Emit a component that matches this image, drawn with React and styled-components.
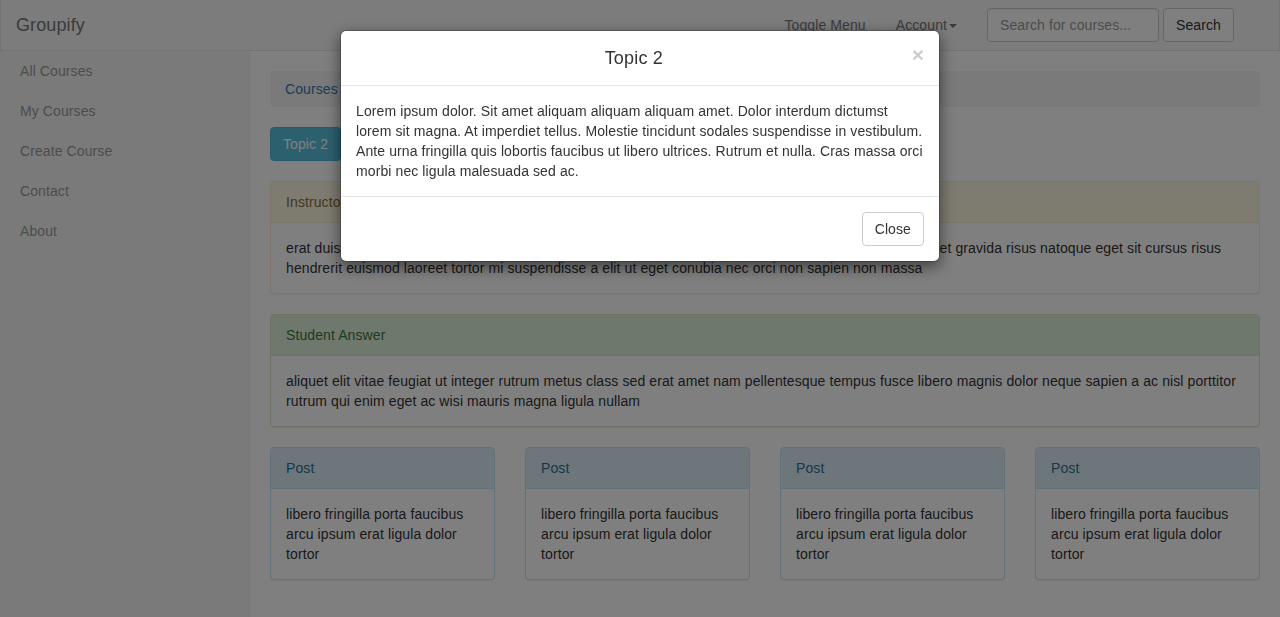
import React from 'react';
import styled, { createGlobalStyle } from 'styled-components';

const GlobalStyle = createGlobalStyle`
  * { box-sizing: border-box; }
  html, body {
    margin: 0;
    height: 100%;
    overflow: hidden;
  }
  body {
    font-family: "Liberation Sans", Arial, Helvetica, sans-serif;
    font-size: 14px;
    line-height: 20px;
    letter-spacing: 0.1px;
    color: #333;
    background: #fff;
  }
`;

const Page = styled.div`
  display: flex;
  flex-direction: column;
  min-height: 100vh;
`;

const Navbar = styled.nav`
  display: flex;
  align-items: center;
  height: 51px;
  background: #f8f8f8;
  border: 1px solid #e7e7e7;
  border-top: 0;
`;

const Brand = styled.a`
  padding: 15px 15px;
  font-size: 18px;
  line-height: 20px;
  color: #777;
  text-decoration: none;
`;

const NavLinks = styled.ul`
  display: flex;
  list-style: none;
  margin: 0 0 0 auto;
  padding: 0;
`;

const NavLink = styled.a`
  display: block;
  padding: 15px;
  color: #777;
  text-decoration: none;
`;

const Caret = styled.span`
  display: inline-block;
  width: 0;
  height: 0;
  margin-left: 2px;
  vertical-align: middle;
  border-top: 4px solid;
  border-right: 4px solid transparent;
  border-left: 4px solid transparent;
`;

const SearchForm = styled.form`
  display: flex;
  gap: 4px;
  padding: 8px 45px 8px 15px;
`;

const SearchInput = styled.input`
  width: 172px;
  height: 34px;
  padding: 6px 12px;
  font: inherit;
  letter-spacing: inherit;
  color: #555;
  border: 1px solid #ccc;
  border-radius: 4px;
  box-shadow: inset 0 1px 1px rgba(0, 0, 0, 0.075);
  &::placeholder { color: #999; }
`;

const Button = styled.button`
  height: 34px;
  padding: 6px 12px;
  font: inherit;
  letter-spacing: inherit;
  line-height: 20px;
  border: 1px solid ${({ $variant }) => ($variant === 'info' ? '#46b8da' : '#ccc')};
  border-radius: 4px;
  background: ${({ $variant }) => ($variant === 'info' ? '#5bc0de' : '#fff')};
  color: ${({ $variant }) => ($variant === 'info' ? '#fff' : '#333')};
  cursor: pointer;
`;

const Body = styled.div`
  display: flex;
  flex: 1;
`;

const Sidebar = styled.ul`
  width: 250px;
  flex-shrink: 0;
  margin: 0;
  padding: 0;
  list-style: none;
  background: #f5f5f5;
  border-right: 1px solid #eee;
`;

const SideLink = styled.a`
  display: block;
  padding: 10px 20px;
  color: #999;
  text-decoration: none;
`;

const Main = styled.main`
  flex: 1;
  padding: 20px;
`;

const Breadcrumb = styled.ol`
  display: flex;
  margin: 0 0 20px;
  padding: 8px 15px;
  list-style: none;
  background: #f5f5f5;
  border-radius: 4px;
  li + li::before {
    content: '/\\00a0';
    padding: 0 5px;
    color: #ccc;
  }
  a { color: #337ab7; text-decoration: none; }
`;

const Toolbar = styled.div`
  display: flex;
  gap: 4px;
  margin-bottom: 20px;
`;

const tones = {
  warning: { bg: '#fcf8e3', color: '#8a6d3b', border: '#faebcc' },
  success: { bg: '#dff0d8', color: '#3c763d', border: '#d6e9c6' },
  info: { bg: '#d9edf7', color: '#31708f', border: '#bce8f1' },
};

const Panel = styled.div`
  margin-bottom: 20px;
  background: #fff;
  border: 1px solid ${({ $tone }) => tones[$tone].border};
  border-radius: 4px;
  box-shadow: 0 1px 1px rgba(0, 0, 0, 0.05);
`;

const PanelHeading = styled.div`
  padding: 10px 15px;
  background: ${({ $tone }) => tones[$tone].bg};
  color: ${({ $tone }) => tones[$tone].color};
  border-bottom: 1px solid ${({ $tone }) => tones[$tone].border};
  border-radius: 3px 3px 0 0;
`;

const PanelBody = styled.div`
  padding: 15px;
`;

const PostGrid = styled.div`
  display: grid;
  grid-template-columns: repeat(4, 1fr);
  column-gap: 30px;
`;

const Backdrop = styled.div`
  position: fixed;
  inset: 0;
  background: rgba(0, 0, 0, 0.5);
  z-index: 10;
`;

const ModalDialog = styled.div`
  width: 600px;
  margin: 30px auto;
`;

const ModalContent = styled.div`
  background: #fff;
  border: 1px solid rgba(0, 0, 0, 0.2);
  border-radius: 6px;
  box-shadow: 0 5px 15px rgba(0, 0, 0, 0.5);
  background-clip: padding-box;
`;

const ModalHeader = styled.div`
  display: flex;
  align-items: flex-start;
  padding: 15px;
  border-bottom: 1px solid #e5e5e5;
`;

const ModalTitle = styled.h4`
  flex: 1;
  margin: 0;
  font-size: 18px;
  font-weight: 500;
  line-height: 24px;
  letter-spacing: 0.2px;
  text-align: center;
`;

const CloseX = styled.button`
  margin-top: -2px;
  padding: 0;
  border: 0;
  background: transparent;
  font: inherit;
  font-size: 21px;
  font-weight: bold;
  line-height: 1;
  color: #000;
  opacity: 0.2;
  text-shadow: 0 1px 0 #fff;
  cursor: pointer;
`;

const ModalBody = styled.div`
  padding: 15px;
`;

const ModalFooter = styled.div`
  display: flex;
  justify-content: flex-end;
  padding: 15px;
  border-top: 1px solid #e5e5e5;
`;

const sideItems = ['All Courses', 'My Courses', 'Create Course', 'Contact', 'About'];

const postText = 'libero fringilla porta faucibus arcu ipsum erat ligula dolor tortor';

export default function App() {
  return (
    <>
      <GlobalStyle />
      <Page>
        <Navbar>
          <Brand href="#">Groupify</Brand>
          <NavLinks>
            <li><NavLink href="#">Toggle Menu</NavLink></li>
            <li><NavLink href="#">Account<Caret /></NavLink></li>
          </NavLinks>
          <SearchForm onSubmit={(e) => e.preventDefault()}>
            <SearchInput placeholder="Search for courses..." />
            <Button type="submit">Search</Button>
          </SearchForm>
        </Navbar>
        <Body>
          <Sidebar>
            {sideItems.map((item) => (
              <li key={item}><SideLink href="#">{item}</SideLink></li>
            ))}
          </Sidebar>
          <Main>
            <Breadcrumb>
              <li><a href="#">Courses</a></li>
              <li><a href="#">Course 1</a></li>
              <li>Topic 2</li>
            </Breadcrumb>
            <Toolbar>
              <Button $variant="info">Topic 2</Button>
            </Toolbar>
            <Panel $tone="warning">
              <PanelHeading $tone="warning">Instructor Question</PanelHeading>
              <PanelBody>
                erat duis lorem sodales cras ipsum velit at nunc morbi proin amet magna diam est purus tempor mauris et gravida risus natoque eget sit cursus risus hendrerit euismod laoreet tortor mi suspendisse a elit ut eget conubia nec orci non sapien non massa
              </PanelBody>
            </Panel>
            <Panel $tone="success">
              <PanelHeading $tone="success">Student Answer</PanelHeading>
              <PanelBody>
                aliquet elit vitae feugiat ut integer rutrum metus class sed erat amet nam pellentesque tempus fusce libero magnis dolor neque sapien a ac nisl porttitor rutrum qui enim eget ac wisi mauris magna ligula nullam
              </PanelBody>
            </Panel>
            <PostGrid>
              {[0, 1, 2, 3].map((i) => (
                <Panel key={i} $tone="info">
                  <PanelHeading $tone="info">Post</PanelHeading>
                  <PanelBody>{postText}</PanelBody>
                </Panel>
              ))}
            </PostGrid>
          </Main>
        </Body>
      </Page>
      <Backdrop>
        <ModalDialog>
          <ModalContent>
            <ModalHeader>
              <ModalTitle>Topic 2</ModalTitle>
              <CloseX aria-label="Close">&times;</CloseX>
            </ModalHeader>
            <ModalBody>
              Lorem ipsum dolor. Sit amet aliquam aliquam aliquam amet. Dolor interdum dictumst lorem sit magna. At imperdiet tellus. Molestie tincidunt sodales suspendisse in vestibulum. Ante urna fringilla quis lobortis faucibus ut libero ultrices. Rutrum et nulla. Cras massa orci morbi nec ligula malesuada sed ac.
            </ModalBody>
            <ModalFooter>
              <Button>Close</Button>
            </ModalFooter>
          </ModalContent>
        </ModalDialog>
      </Backdrop>
    </>
  );
}
